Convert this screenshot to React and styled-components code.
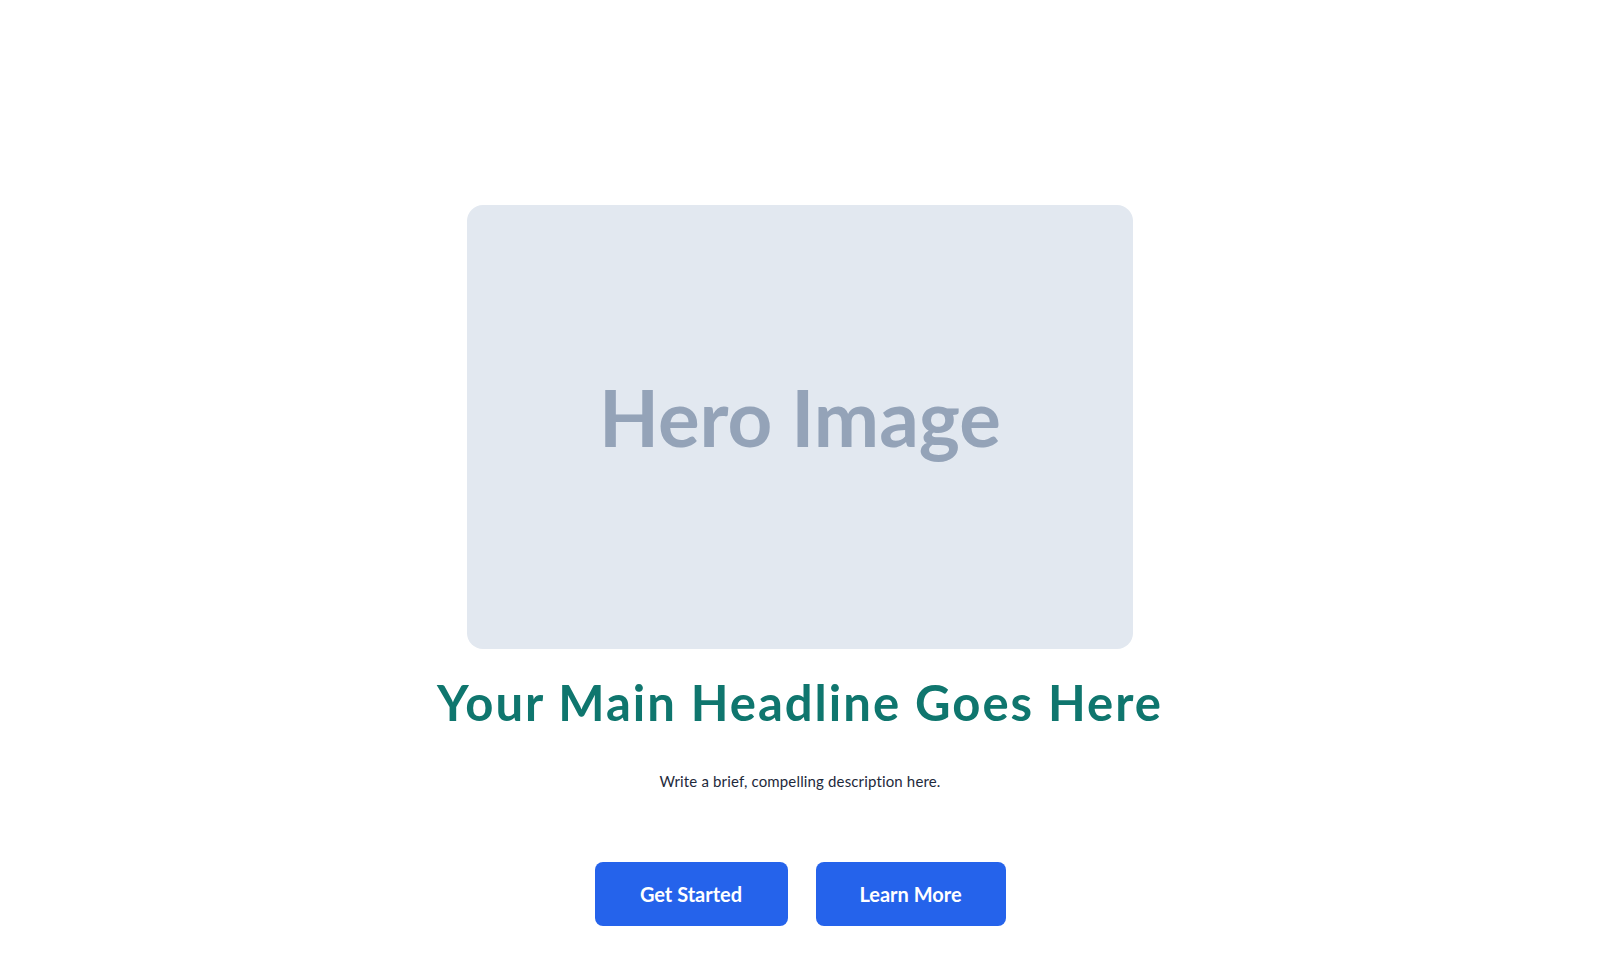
import React from "react";
import styled, { createGlobalStyle } from "styled-components";

const GlobalStyle = createGlobalStyle`
  * { box-sizing: border-box; }
  html, body { margin: 0; padding: 0; background: #ffffff; }
  body { font-family: "Lato", "Noto Sans", sans-serif; -webkit-font-smoothing: antialiased; }
`;

const Page = styled.main`
  min-height: 978px;
  display: flex;
  flex-direction: column;
  align-items: center;
  padding-top: 205px;
  text-align: center;
`;

const HeroImage = styled.div`
  width: 666px;
  height: 444px;
  border-radius: 16px;
  background: #e2e8f0;
  display: flex;
  align-items: center;
  justify-content: center;
  padding-bottom: 20px;
  color: #94a3b8;
  font-family: "Lato", sans-serif;
  font-weight: 700;
  font-size: 78px;
  line-height: 1;
`;

const Headline = styled.h1`
  margin: 24px 0 0;
  font-family: "Lato", sans-serif;
  font-weight: 700;
  font-size: 49px;
  line-height: 1.2;
  color: #0f766e;
  letter-spacing: 2px;
`;

const Description = styled.p`
  margin: 37px 0 0;
  font-family: "Lato", sans-serif;
  font-size: 15px;
  line-height: 24px;
  letter-spacing: 0.15px;
  color: #1e293b;
`;

const Actions = styled.div`
  display: flex;
  gap: 28px;
  margin-top: 69px;
`;

const Button = styled.button`
  border: none;
  border-radius: 8px;
  background: #2563eb;
  color: #ffffff;
  font-family: "Lato", sans-serif;
  font-weight: 700;
  font-size: 20px;
  line-height: 24px;
  padding: 20px 0;
  width: ${(p) => p.$width}px;
  cursor: pointer;
`;

export default function App() {
  return (
    <>
      <GlobalStyle />
      <Page>
        <HeroImage>Hero Image</HeroImage>
        <Headline>Your Main Headline Goes Here</Headline>
        <Description>Write a brief, compelling description here.</Description>
        <Actions>
          <Button $width={193}>Get Started</Button>
          <Button $width={190}>Learn More</Button>
        </Actions>
      </Page>
    </>
  );
}
